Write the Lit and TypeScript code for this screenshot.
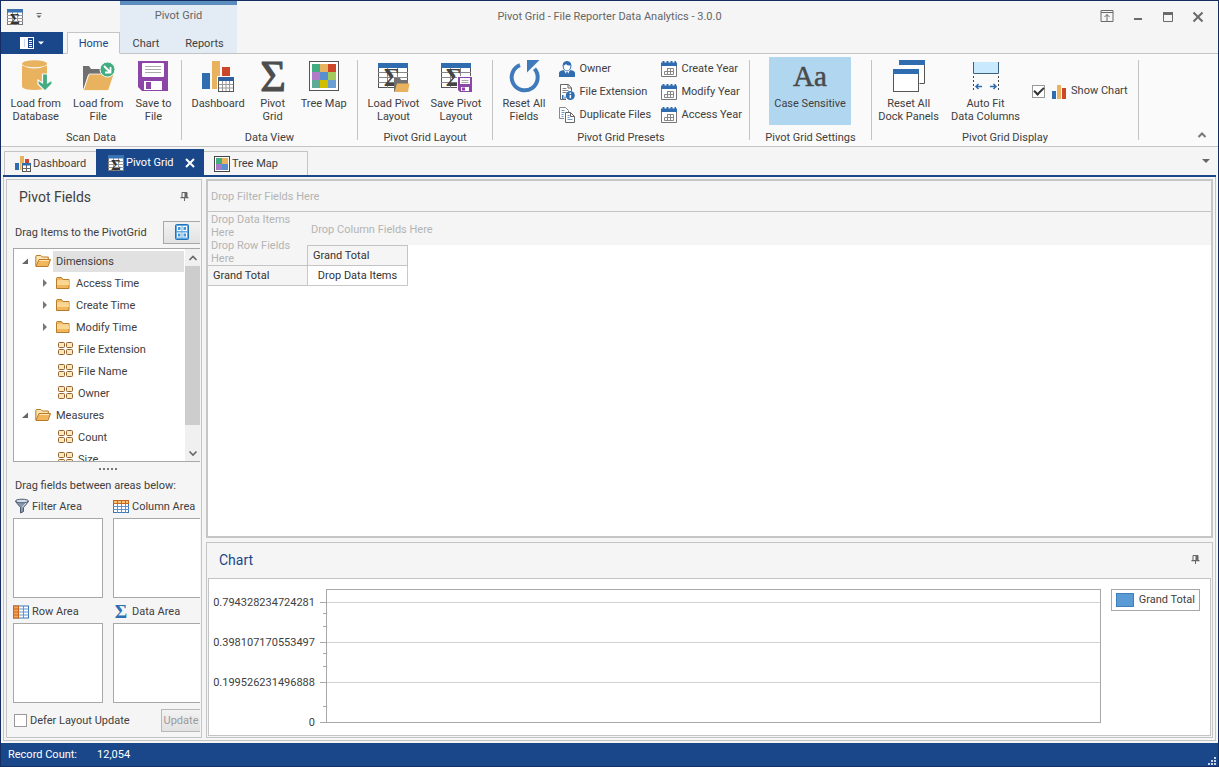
import { LitElement, html, css, svg, nothing, TemplateResult } from "lit";
import { customElement, property, state } from "lit/decorators.js";
import { classMap } from "lit/directives/class-map.js";

/* ---------- icons ---------- */

const gridLines = svg`
  <rect x="1.5" y="3.5" width="29" height="24" fill="#fff" stroke="#555"/>
  <path d="M1 12.5h30M1 17.5h30M1 22.5h30M10.500 7v21M20.500 7v21" stroke="#888" fill="none"/>
  <rect x="1" y="3" width="30" height="5" fill="#2f6cb0"/>`;

const sigma = (x: number, y: number, size: number, fill: string, bold = false) => svg`
  <text x=${x} y=${y} font-family="Liberation Serif, serif" font-size=${size}
    font-weight=${bold ? "bold" : "normal"} text-anchor="middle" fill=${fill}>Σ</text>`;

const calendar = svg`
  <path d="M.5 4v11.500h15V4" fill="#fff" stroke="#777"/>
  <path d="M0 1.500h1.500V0h2v1.500h2V0h2v1.500h2V0h2v1.500h2V0h1.500v1.500H16V5H0z" fill="#2f6cb0"/>
  <path d="M6 7.500h6.500v6h-9V10.500h9M6.500 7.500v6M9.500 7.500v6" stroke="#888" fill="none"/>`;

const folderClosed = svg`
  <path d="M1.500 3.500q0-1 1-1h4l1.500 2h6v9h-12.500z" fill="#f0b75c" stroke="#b87a2b"/>
  <path d="M2 6h12" stroke="#fff0c8"/>
  <path d="M2 7h12v3H2z" fill="#fbd78f"/>`;

const folderOpen = svg`
  <path d="M.8 13V3.500q0-1 1-1h4l1.500 1.500h6v2.500" fill="#fbe3ae" stroke="#b87a2b"/>
  <path d="M1 13.500L4 6.500h11.500L13 13.500z" fill="#f1b75a" stroke="#b87a2b"/>
  <path d="M4.500 7.500h9.500" stroke="#fde6b4"/>`;

const ICONS: Record<string, { box: number; art: TemplateResult }> = {
  database: {
    box: 32,
    art: svg`
      <path d="M2 5.500q12.500 6 25 0V27q-2 3-12.500 3T2 27z" fill="#e9b25f"/>
      <ellipse cx="14.500" cy="3.700" rx="12.500" ry="3.500" fill="#e9b25f"/>
      <path d="M22.500 14h5v9l4.500-3v4l-7 7-7-7v-4l4.500 3z" fill="#43ac80" stroke="#fafafa" stroke-width="1.200"/>`,
  },
  loadFile: {
    box: 32,
    art: svg`
      <path d="M1 30V6h6l2 3h12v6H6z" fill="#707070"/>
      <path d="M7 14h25l-5.500 16.500H1.500z" fill="#e9b25f" stroke="#fafafa" stroke-width=".8"/>
      <circle cx="25.500" cy="9.500" r="7.500" fill="#43ac80" stroke="#fafafa"/>
      <path d="M22 6l6 6M28.500 7v5.500H23" stroke="#fff" stroke-width="1.800" fill="none"/>`,
  },
  save: {
    box: 32,
    art: svg`
      <path d="M1 1h30v30H5l-4-4z" fill="#8b46a8"/>
      <rect x="5" y="3" width="22" height="14" rx="1" fill="#fff"/>
      <path d="M8 6.500h16M8 9.500h16M8 12.500h16" stroke="#aaa"/>
      <path d="M7 21h18v9H7z" fill="#fff"/><path d="M9 22h5v7H9z" fill="#8b46a8"/>`,
  },
  dashboard: {
    box: 32,
    art: svg`
      <path d="M0 13h8v16H0z" fill="#2f6cb0"/><path d="M10 1h8v28h-8z" fill="#e9b25f"/>
      <path d="M20 7h8v10h-8z" fill="#ce4629"/>
      <rect x="15" y="16" width="17" height="16" fill="#fafafa"/>
      <rect x="16.500" y="17.500" width="15" height="14" fill="#fff" stroke="#555"/>
      <path d="M17 24.500h14M17 28h14M20.500 20v11M24 20v11M27.500 20v11" stroke="#999"/>
      <path d="M16 17h16v4H16z" fill="#2f5f9e"/>`,
  },
  sigma: { box: 32, art: svg`<g stroke="#4d4d4d">${sigma(16, 31, 44, "#4d4d4d")}</g>` },
  treeMap: {
    box: 32,
    art: svg`
      <rect x="1.500" y="1.500" width="29" height="29" fill="#fff" stroke="#555"/>
      <path d="M4 4h8v8H4z" fill="#43ac80"/><path d="M12 4h8v8h-8z" fill="#e9b25f"/><path d="M20 4h8v8h-8z" fill="#ce4629"/>
      <path d="M4 12h8v8H4z" fill="#b07cc6"/><path d="M12 12h8v8h-8z" fill="#5a8fcf"/><path d="M20 12h8v8h-8z" fill="#a2cb5c"/>
      <path d="M4 20h8v8H4z" fill="#5fab98"/><path d="M12 20h8v8h-8z" fill="#cfbf00"/><path d="M20 20h8v8h-8z" fill="#6b9fd4"/>`,
  },
  loadLayout: {
    box: 32,
    art: svg`${gridLines}${sigma(15, 26, 25, "#444", true)}
      <path d="M17 32V18h6l1 2h7v4z" fill="#707070"/>
      <path d="M20 23.500h12.500L31 32H17.500z" fill="#e9b25f"/>`,
  },
  saveLayout: {
    box: 32,
    art: svg`${gridLines}${sigma(14, 26, 25, "#444", true)}
      <path d="M17 16h16v16H17z" fill="#fafafa"/>
      <path d="M18 17h14v15H20l-2-2z" fill="#8b46a8"/><path d="M20 18h10v6H20z" fill="#fff"/>
      <path d="M21.500 20.500h7M21.500 22.500h7" stroke="#aaa"/><path d="M21 27h8v4h-8z" fill="#fff"/><path d="M22 27.500h3v3h-3z" fill="#8b46a8"/>`,
  },
  reset: {
    box: 32,
    art: svg`
      <path d="M12 5.200A13 13 0 1 0 26.500 8.800" fill="none" stroke="#3f7bbb" stroke-width="4"/>
      <path d="M19 0h12.500L19 12.500z" fill="#3f7bbb"/>`,
  },
  caseSensitive: {
    box: 32,
    art: svg`<text x="16" y="26" font-family="Liberation Serif, serif" font-size="29" text-anchor="middle"
      fill="#4a4a4a" stroke="#4a4a4a" stroke-width=".5">Aa</text>`,
  },
  dockPanels: {
    box: 32,
    art: svg`
      <path d="M6.500.5h25v23h-6" fill="#fff" stroke="#555"/><path d="M6 0h26v5H6z" fill="#2f6cb0"/>
      <path d="M-.5 8h27v24h-27z" fill="#fafafa"/>
      <rect x=".5" y="9.500" width="25" height="22" fill="#fff" stroke="#555"/><path d="M0 9h26v5H0z" fill="#2f6cb0"/>`,
  },
  autoFit: {
    box: 32,
    art: svg`
      <path d="M3.500 2v11.500h25V2" fill="#c9e9ff" stroke="#3d627e"/>
      <path d="M3.500 16v15M28.500 16v15" stroke="#444" stroke-dasharray="2 2"/>
      <path d="M12 26.500H6M8.500 24L6 26.500 8.500 29M20 26.500h6M23.500 24l2.500 2.500-2.500 2.500" stroke="#2f6cb0" stroke-width="1.500" fill="none"/>`,
  },
  owner: {
    box: 16,
    art: svg`
      <path d="M4 4.500Q4 .5 8 .5t4 4Q11.500 10 8 10T4 4.500z" fill="#fff" stroke="#2f6cb0"/>
      <path d="M4 4.500Q4 .5 8 .5t4 4Q8 5 7 3 6 4.500 4 4.500z" fill="#2f6cb0"/>
      <path d="M0 16v-4q0-2 4.500-3L8 13l3.500-4q4.500 1 4.500 3v4z" fill="#2f6cb0"/>
      <path d="M5.500 9.500L8 15.500l2.500-6L8 11z" fill="#fff"/><path d="M7.300 11h1.400l.6 4L8 16l-1.300-1z" fill="#2f6cb0"/>`,
  },
  extension: {
    box: 16,
    art: svg`
      <path d="M7 15.500H1.500V.5h8L12.500 4v3" fill="#fff" stroke="#666"/><path d="M9 .5V4h3.500" fill="none" stroke="#666"/>
      <path d="M3.500 4.500h4M3.500 6.500h6M3.500 8.500h4" stroke="#888"/><path d="M3 11h1.500v4H3zM5.500 12.500h1V15h-1z" fill="#2f6cb0"/>
      <circle cx="11.300" cy="11.500" r="4.500" fill="#2f6cb0"/><path d="M10.600 8.500h1.500V10h-1.500zM10.600 11h1.500v3.300h-1.500z" fill="#fff"/>`,
  },
  duplicate: {
    box: 16,
    art: svg`
      <path d="M5 11.500H.5V.5h6l3 3V5" fill="#fff" stroke="#888"/><path d="M2.500 3.500h3M2.500 5.500h3M2.500 7.500h2M2.500 9.500h2" stroke="#6f97c4"/>
      <path d="M6.500 5.500h5l4 4v6h-9z" fill="#fff" stroke="#666"/><path d="M11.500 5.500v4h4" fill="none" stroke="#666"/>
      <path d="M8.500 8.500h2M8.500 10.500h2M8.500 12.500h5" stroke="#6f97c4"/>`,
  },
  calendar: { box: 16, art: calendar },
  bars: {
    box: 16,
    art: svg`<path d="M0 8h4v8H0z" fill="#2f6cb0"/><path d="M5 2h4v14H5z" fill="#e9b25f"/><path d="M10 5h4v11h-4z" fill="#ce4629"/>`,
  },
  dashboardSmall: {
    box: 16,
    art: svg`
      <path d="M0 7h4v7H0z" fill="#2f6cb0"/><path d="M5 0h4v14H5z" fill="#e9b25f"/><path d="M10 3h4v4h-4z" fill="#ce4629"/>
      <path d="M6.500 7h9.500v9H6.500z" fill="#fafafa"/><rect x="7.500" y="7.500" width="8" height="8" fill="#fff" stroke="#555"/>
      <path d="M8 12.500h8M11.500 9v7" stroke="#666"/><path d="M7 7h9v2.500H7z" fill="#2f6cb0"/>`,
  },
  pivotSmall: {
    box: 16,
    art: svg`
      <rect x=".5" y=".5" width="15" height="15" fill="#fff" stroke="#777"/><path d="M0 6.500h16M0 9.500h16M0 12.500h16M5.500 3v13M10.500 3v13" stroke="#999"/>
      <path d="M0 0h16v3.500H0z" fill="#3a73b2"/>${sigma(8, 15, 15, "#333", true)}`,
  },
  treeMapSmall: {
    box: 16,
    art: svg`
      <rect x=".5" y=".5" width="15" height="15" fill="#fff" stroke="#444"/>
      <path d="M2 2h6v6H2z" fill="#43ac80"/><path d="M8 2h6v6H8z" fill="#e9b25f"/>
      <path d="M2 8h6v6H2z" fill="#a878c8"/><path d="M8 8h6v6H8z" fill="#5a8fcf"/>`,
  },
  fileMenu: {
    box: 16,
    art: svg`
      <path d="M1 2h7v12H1z" fill="#fff"/><rect x="8.500" y="2.500" width="6" height="11" fill="none" stroke="#fff"/>
      <path d="M10 5.500h3M10 7.500h3M10 9.500h3M10 11.500h3" stroke="#fff"/><path d="M5.500 4v8" stroke="#c9d6ea"/>`,
  },
  folder: { box: 16, art: folderClosed },
  folderOpen: { box: 16, art: folderOpen },
  field: {
    box: 16,
    art: svg`<g fill="#fce9bd" stroke="#94602f">
      <rect x=".5" y="1.500" width="6" height="5" rx="1"/><rect x="8.500" y="1.500" width="6" height="5" rx="1"/>
      <rect x=".5" y="8.500" width="6" height="5" rx="1"/><rect x="8.500" y="8.500" width="6" height="5" rx="1"/></g>`,
  },
  layoutPicker: {
    box: 16,
    art: svg`<rect x="1.500" y=".5" width="13" height="15" rx="1" fill="#5fa8e4" stroke="#2173ba"/>
      <g fill="#4b93d3" stroke="#fff"><rect x="3.500" y="2.500" width="3.500" height="4"/><rect x="9" y="2.500" width="3.500" height="4"/>
      <rect x="3.500" y="9" width="3.500" height="4"/><rect x="9" y="9" width="3.500" height="4"/></g>`,
  },
  filter: {
    box: 16,
    art: svg`<path d="M2.500 2.500L7.500 8.500V14l3-1.500v-4l5-6z" fill="#8b99ad" stroke="#4c5b73"/>
      <path d="M9.500 8l4-4.500" stroke="#dfe6ee"/><ellipse cx="9" cy="2" rx="6.500" ry="1.800" fill="#d6dde6" stroke="#4c5b73"/>`,
  },
  columnArea: {
    box: 16,
    art: svg`<rect x=".5" y="1.500" width="15" height="12" fill="#fff" stroke="#3f77b5"/>
      <path d="M0 7.500h16M0 10.500h16M4.500 5v9M8.500 5v9M12.500 5v9" stroke="#5f93cc"/>
      <rect x=".5" y="1.500" width="15" height="3" fill="#f7c27c" stroke="#c8681c"/><path d="M4.500 2v3M8.500 2v3M12.500 2v3" stroke="#c8681c"/>`,
  },
  rowArea: {
    box: 16,
    art: svg`<rect x=".5" y="2" width="15" height="12" fill="#fff" stroke="#3f77b5"/>
      <path d="M5 5h11M5 8h11M5 11h11M10.500 2v12" stroke="#5f93cc"/>
      <rect x=".5" y="2" width="5" height="12" fill="#f3a45a" stroke="#c8681c"/><path d="M1 5h4M1 8h4M1 11h4" stroke="#c8681c"/>`,
  },
  dataArea: { box: 16, art: svg`${sigma(8, 14, 19, "#2c6fb5", true)}` },
  pin: {
    box: 10,
    art: svg`<path d="M3 .5h5v5H3z" fill="none" stroke="#666"/><path d="M5.500 0H8v5.500H5.500zM1.500 5h8v1.200h-8zM5 6h1v3H5z" fill="#666"/>`,
  },
  close: { box: 12, art: svg`<path d="M1.500 1.500l9 9M10.500 1.500l-9 9" stroke="currentColor" stroke-width="2"/>` },
  closeSmall: { box: 10, art: svg`<path d="M1 1l8 8M9 1l-8 8" stroke="currentColor" stroke-width="2"/>` },
  minimize: { box: 12, art: svg`<path d="M2 7h8v2H2z" fill="currentColor"/>` },
  maximize: { box: 12, art: svg`<path d="M1.500 1.500h9v9h-9z" fill="none" stroke="currentColor"/><path d="M1 1h10v3H1z" fill="currentColor"/>` },
  ribbonMode: {
    box: 14,
    art: svg`<path d="M1 .5h12v11H1zM1 2.500h12" fill="none" stroke="currentColor"/><path d="M7 11V4.500M4.500 7L7 4.500 9.500 7" fill="none" stroke="currentColor"/>`,
  },
  collapse: { box: 10, art: svg`<path d="M1.500 7L5 3.500 8.500 7" fill="none" stroke="#777" stroke-width="2"/>` },
  scrollUp: { box: 10, art: svg`<path d="M1.500 7L5 3.500 8.500 7" fill="none" stroke="#666" stroke-width="1.600"/>` },
  scrollDown: { box: 10, art: svg`<path d="M1.500 3.500L5 7l3.500-3.500" fill="none" stroke="#666" stroke-width="1.600"/>` },
  arrowDown: { box: 8, art: svg`<path d="M0 2h8L4 6z" fill="currentColor"/>` },
  arrowSmall: { box: 8, art: svg`<path d="M1 2.500h6L4 5.500z" fill="currentColor"/>` },
  customize: { box: 8, art: svg`<path d="M1.500 0h5v1h-5zM1.500 2.500h5L4 5z" fill="#666"/>` },
  expanded: { box: 8, art: svg`<path d="M7 1.500V7H1z" fill="#666"/>` },
  collapsed: { box: 8, art: svg`<path d="M2 0v8l4-4z" fill="#777"/>` },
  grip: {
    box: 10,
    art: svg`<path d="M7 1h2v2H7zM4 4h2v2H4zM7 4h2v2H7zM1 7h2v2H1zM4 7h2v2H4zM7 7h2v2H7z" fill="#c9d3e4"/>`,
  },
};

const icon = (name: string) => {
  const { box, art } = ICONS[name];
  return html`<svg class="icon" width=${box} height=${box} viewBox="0 0 ${box} ${box}" aria-hidden="true">${art}</svg>`;
};

/* ---------- data ---------- */

interface Command { icon: string; label: string; pressed?: boolean }
interface TreeNode { icon: string; label: string; kind: "root" | "branch" | "leaf"; open?: boolean; selected?: boolean }

const SCAN: Command[] = [
  { icon: "database", label: "Load from\nDatabase" },
  { icon: "loadFile", label: "Load from\nFile" },
  { icon: "save", label: "Save to\nFile" },
];
const VIEWS: Command[] = [
  { icon: "dashboard", label: "Dashboard" },
  { icon: "sigma", label: "Pivot\nGrid" },
  { icon: "treeMap", label: "Tree Map" },
];
const LAYOUTS: Command[] = [
  { icon: "loadLayout", label: "Load Pivot\nLayout" },
  { icon: "saveLayout", label: "Save Pivot\nLayout" },
];
const PRESETS: Command[] = [
  { icon: "owner", label: "Owner" },
  { icon: "calendar", label: "Create Year" },
  { icon: "extension", label: "File Extension" },
  { icon: "calendar", label: "Modify Year" },
  { icon: "duplicate", label: "Duplicate Files" },
  { icon: "calendar", label: "Access Year" },
];
const DISPLAY: Command[] = [
  { icon: "dockPanels", label: "Reset All\nDock Panels" },
  { icon: "autoFit", label: "Auto Fit\nData Columns" },
];
const FIELDS: TreeNode[] = [
  { icon: "folderOpen", label: "Dimensions", kind: "root", open: true, selected: true },
  { icon: "folder", label: "Access Time", kind: "branch" },
  { icon: "folder", label: "Create Time", kind: "branch" },
  { icon: "folder", label: "Modify Time", kind: "branch" },
  { icon: "field", label: "File Extension", kind: "leaf" },
  { icon: "field", label: "File Name", kind: "leaf" },
  { icon: "field", label: "Owner", kind: "leaf" },
  { icon: "folderOpen", label: "Measures", kind: "root", open: true },
  { icon: "field", label: "Count", kind: "leaf" },
  { icon: "field", label: "Size", kind: "leaf" },
];
const AREAS = [
  { icon: "filter", label: "Filter Area" },
  { icon: "columnArea", label: "Column Area" },
  { icon: "rowArea", label: "Row Area" },
  { icon: "dataArea", label: "Data Area" },
];
const AXIS = ["0.794328234724281", "0.398107170553497", "0.199526231496888", "0"];

/* ---------- shared styles ---------- */

const base = css`
  * { box-sizing: border-box; }
  button {
    font: inherit; color: inherit; background: none; border: 0; padding: 0; margin: 0;
    display: flex; align-items: center; justify-content: center;
  }
  a { color: inherit; text-decoration: none; }
  .icon { display: block; flex: none; overflow: visible; }
  h2, p { margin: 0; font: inherit; }
`;

/* ---------- ribbon ---------- */

@customElement("ribbon-group")
class RibbonGroup extends LitElement {
  @property() caption = "";
  static styles = [base, css`
    :host { display: flex; flex-direction: column; height: 80px; border-right: 1px solid #c4c4c4; flex: none; }
    .items { display: flex; flex: none; justify-content: center; height: 70px; }
    .caption { text-align: center; line-height: 15px; white-space: nowrap; }
  `];
  render() {
    return html`<div class="items"><slot></slot></div><div class="caption">${this.caption}</div>`;
  }
}

@customElement("app-ribbon")
class AppRibbon extends LitElement {
  @state() private showChart = true;

  static styles = [base, css`
    :host { display: flex; align-items: flex-start; padding: 6px 0 4px; height: 93px; background: #fafafa; border-bottom: 1px solid #c4c4c4; }
    .scan { width: 181px; }
    .view { width: 176px; }
    .layout { width: 135px; }
    .presets { width: 257px; }
    .settings { width: 122px; }
    .display { width: 267px; }
    .large { flex-direction: column; justify-content: flex-start; min-width: 46px; padding: 0 6px; height: 65px; }
    .layout .large, .view .large { margin-left: -1px; }
    .large span { margin-top: 5px; line-height: 13px; text-align: center; white-space: pre; }
    .pressed { background: #b1d6f0; width: 82px; padding: 3px 0 0; height: 68px; margin-top: -3px; margin-right: 1px; }
    .small { display: grid; grid-template-columns: 102px 84px; grid-auto-rows: 23px; height: 69px; margin: -3px 0 0 8px; }
    .small button { justify-content: flex-start; gap: 4px; }
    .check { display: flex; align-items: center; height: 62px; margin: 0 10px 0 6px; }
    .check input { margin: 0 7px 0 0; }
    .check .icon { margin-right: 3px; }
    .collapse { margin: auto 10px 0 auto; width: 12px; height: 14px; }
    input {
      appearance: none; width: 13px; height: 13px; border: 1px solid #999; background: #fff; display: grid; place-items: center;
    }
    input:checked::after {
      content: ""; width: 4px; height: 8px; margin-top: -2px; border: solid #333; border-width: 0 2px 2px 0; transform: rotate(45deg);
    }
  `];

  private large(c: Command) {
    return html`<button type="button" class=${classMap({ large: true, pressed: !!c.pressed })}
      aria-pressed=${c.pressed ? "true" : nothing}>${icon(c.icon)}<span>${c.label}</span></button>`;
  }

  render() {
    return html`
      <ribbon-group class="scan" caption="Scan Data">${SCAN.map((c) => this.large(c))}</ribbon-group>
      <ribbon-group class="view" caption="Data View">${VIEWS.map((c) => this.large(c))}</ribbon-group>
      <ribbon-group class="layout" caption="Pivot Grid Layout">${LAYOUTS.map((c) => this.large(c))}</ribbon-group>
      <ribbon-group class="presets" caption="Pivot Grid Presets">
        ${this.large({ icon: "reset", label: "Reset All\nFields" })}
        <div class="small">
          ${PRESETS.map((c) => html`<button type="button">${icon(c.icon)}<span>${c.label}</span></button>`)}
        </div>
      </ribbon-group>
      <ribbon-group class="settings" caption="Pivot Grid Settings">
        ${this.large({ icon: "caseSensitive", label: "Case Sensitive", pressed: true })}
      </ribbon-group>
      <ribbon-group class="display" caption="Pivot Grid Display">
        ${DISPLAY.map((c) => this.large(c))}
        <label class="check">
          <input type="checkbox" .checked=${this.showChart}
            @change=${(e: Event) => (this.showChart = (e.target as HTMLInputElement).checked)} />
          ${icon("bars")}Show Chart
        </label>
      </ribbon-group>
      <button type="button" class="collapse" aria-label="Collapse ribbon">${icon("collapse")}</button>`;
  }
}

/* ---------- field list ---------- */

@customElement("pivot-fields")
class PivotFields extends LitElement {
  static styles = [base, css`
    :host {
      display: flex; flex-direction: column; width: 196px; flex: none; min-height: 0; overflow: hidden;
      border: 1px solid #c4c4c4; padding: 0 1px 5px 6px;
    }
    .head { display: flex; align-items: center; justify-content: space-between; height: 35px; padding: 0 11px 2px 6px; }
    .head h2 { font-size: 14px; }
    .tools { display: flex; align-items: center; justify-content: space-between; margin: 6px 0 4px; padding-left: 2px; }
    .tools button, .foot button {
      height: 23px; background: linear-gradient(#f2f2f2, #e2e2e2); border: 1px solid #a8a8a8; border-right: 0;
    }
    .tools button { width: 37px; padding-bottom: 1px; }
    .tree { flex: 1; min-height: 0; display: flex; background: #fff; border: 1px solid #a8a8a8; border-right: 0; overflow: hidden; }
    .rows { flex: 1; padding-top: 1px; min-width: 0; }
    .row { display: flex; align-items: center; height: 22px; }
    .root { padding-left: 5px; }
    .branch { padding-left: 25px; }
    .leaf { padding-left: 44px; }
    .toggle { width: 12px; height: 12px; margin-right: 4px; }
    .name { flex: 1; margin-left: 2px; padding-left: 3px; line-height: 21px; }
    .leaf .name { padding-left: 2px; }
    .selected .name { background: #e1e1e1; }
    .scroll { width: 15px; display: flex; flex-direction: column; background: #f0f0f0; margin-left: 1px; }
    .scroll button { height: 17px; flex: none; }
    .thumb { flex: 1; background: #cdcdcd; margin-bottom: 19px; }
    .split { display: flex; justify-content: center; align-items: center; gap: 2px; height: 13px; padding-left: 2px; }
    .split i { width: 2px; height: 2px; background: #777; }
    .hint { padding-left: 2px; line-height: 22px; }
    .areas { display: grid; grid-template-columns: 90px 1fr; column-gap: 10px; row-gap: 4px; }
    .title { display: flex; align-items: center; gap: 3px; height: 21px; padding-bottom: 2px; white-space: nowrap; }
    .drop { height: 80px; background: #fff; border: 1px solid #a8a8a8; }
    .area:nth-child(even) .drop { border-right: 0; }
    .foot { display: flex; align-items: center; justify-content: space-between; margin-top: 6px; padding-left: 1px; }
    .foot label { display: flex; align-items: center; gap: 3px; }
    .foot input { appearance: none; margin: 0; width: 13px; height: 13px; border: 1px solid #999; background: #fff; }
    .foot button { width: 39px; color: #9a9a9a; border-color: #b8b8b8; }
  `];

  render() {
    return html`
      <div class="head"><h2>Pivot Fields</h2><button type="button" aria-label="Auto hide">${icon("pin")}</button></div>
      <div class="tools"><span>Drag Items to the PivotGrid</span>
        <button type="button" aria-label="Field list layout">${icon("layoutPicker")}</button></div>
      <div class="tree">
        <div class="rows" role="tree">
          ${FIELDS.map((n) => html`
            <div role="treeitem" class=${classMap({ row: true, [n.kind]: true, selected: !!n.selected })}>
              ${n.kind === "leaf" ? nothing : html`<button type="button" class="toggle" aria-label="Toggle ${n.label}">${icon(n.open ? "expanded" : "collapsed")}</button>`}
              ${icon(n.icon)}<span class="name">${n.label}</span>
            </div>`)}
        </div>
        <div class="scroll">
          <button type="button" aria-label="Scroll up">${icon("scrollUp")}</button>
          <div class="thumb"></div>
          <button type="button" aria-label="Scroll down">${icon("scrollDown")}</button>
        </div>
      </div>
      <div class="split"><i></i><i></i><i></i><i></i><i></i></div>
      <p class="hint">Drag fields between areas below:</p>
      <div class="areas">
        ${AREAS.map((a) => html`<div class="area"><div class="title">${icon(a.icon)}${a.label}</div><div class="drop"></div></div>`)}
      </div>
      <div class="foot">
        <label><input type="checkbox" />Defer Layout Update</label>
        <button type="button" disabled>Update</button>
      </div>`;
  }
}

/* ---------- pivot grid ---------- */

@customElement("pivot-grid")
class PivotGrid extends LitElement {
  static styles = [base, css`
    :host { display: block; flex: 1; min-height: 0; background: #fff; border: 2px solid #c6c6c6; color: #333; }
    .filter { height: 31px; line-height: 32px; padding-left: 3px; background: #f5f5f5; border-bottom: 1px solid #c4c4c4; }
    .filter, .hint { color: #b4b4b4; }
    table { width: 100%; table-layout: fixed; border-collapse: separate; border-spacing: 0; }
    .first { width: 99px; }
    .second { width: 101px; }
    th, td { padding: 0; font-weight: normal; text-align: left; }
    .hint { background: #f5f5f5; padding-left: 3px; }
    .corner { line-height: 13px; vertical-align: top; border-bottom: 1px solid #c4c4c4; }
    .corner p { padding-right: 10px; }
    .corner p:first-child { padding-top: 1px; }
    .columns { height: 33px; padding-left: 4px; padding-top: 2px; }
    .total { height: 21px; padding-left: 5px; background: #f5f5f5; }
    .column { border: 1px solid #c4c4c4; }
    .row { height: 20px; border-bottom: 1px solid #c4c4c4; }
    .items { text-align: center; border: solid #c9c9c9; border-width: 0 1px 1px; }
  `];

  render() {
    return html`
      <div class="filter">Drop Filter Fields Here</div>
      <table>
        <colgroup><col class="first" /><col class="second" /><col /></colgroup>
        <tr>
          <td class="hint corner" rowspan="2"><p>Drop Data Items Here</p><p>Drop Row Fields Here</p></td>
          <td class="hint columns" colspan="2">Drop Column Fields Here</td>
        </tr>
        <tr><th class="total column">Grand Total</th><td></td></tr>
        <tr><th class="total row">Grand Total</th><td class="items">Drop Data Items</td><td></td></tr>
      </table>`;
  }
}

/* ---------- chart ---------- */

@customElement("chart-panel")
class ChartPanel extends LitElement {
  static styles = [base, css`
    :host { display: block; flex: none; border: 1px solid #c4c4c4; padding: 0 1px 1px; }
    .head { display: flex; align-items: center; justify-content: space-between; height: 35px; padding: 0 11px 2px; }
    .head h2 { font-size: 14px; color: #19478a; }
    .canvas { display: flex; align-items: flex-start; background: #fff; border: 1px solid #c4c4c4; padding: 10px 10px 12px 4px; }
    .axis { display: flex; flex-direction: column; gap: 24px; padding-top: 6px; width: 102px; height: 134px; text-align: right; line-height: 16px; }
    .axis span { flex: none; }
    .ticks { margin-left: 5px; }
    .plot { flex: 1; border: 1px solid #a8a8a8; padding-top: 12px; }
    .line { height: 40px; border-top: 1px solid #d2d2d2; }
    .legend { display: flex; align-items: center; gap: 5px; height: 22px; margin-left: 10px; padding: 0 4px; border: 1px solid #a8a8a8; }
    .swatch { width: 18px; height: 14px; background: #5b9bd5; border: 1px solid #3f7fbb; }
  `];

  render() {
    return html`
      <div class="head"><h2>Chart</h2><button type="button" aria-label="Auto hide">${icon("pin")}</button></div>
      <div class="canvas">
        <div class="axis">${AXIS.map((v) => html`<span>${v}</span>`)}</div>
        <svg class="ticks" width="6" height="134" aria-hidden="true">
          <path stroke="#a8a8a8" d="M0 13.500h6M0 53.500h6M0 93.500h6M0 133.500h6M3 24.500h3M3 37.500h3M3 64.500h3M3 77.500h3M3 117.500h3" />
        </svg>
        <div class="plot"><div class="line"></div><div class="line"></div><div class="line"></div></div>
        <div class="legend"><span class="swatch"></span>Grand Total</div>
      </div>`;
  }
}

/* ---------- window ---------- */

@customElement("app-root")
class AppRoot extends LitElement {
  static styles = [base, css`
    :host {
      display: flex; flex-direction: column; box-sizing: border-box; height: 100vh; overflow: hidden;
      border: 1px solid #142d62; background: #f5f5f5; color: #404040;
      font: 11px/14px Roboto, "Liberation Sans", sans-serif;
    }
    .titlebar { display: grid; grid-template-columns: 1fr auto 1fr; height: 31px; color: #666; }
    .left { display: flex; }
    .quick { display: flex; align-items: center; gap: 12px; width: 119px; padding-left: 6px; }
    .context { width: 117px; border-top: 4px solid #5b8dbf; background: #e3ecf5; text-align: center; line-height: 22px; }
    .caption { line-height: 31px; }
    .controls { display: flex; justify-content: flex-end; align-items: center; gap: 18px; padding-right: 14px; color: #6a6a6a; }
    .tabs { display: flex; height: 22px; }
    .tabs a { display: flex; align-items: center; justify-content: center; border-bottom: 1px solid #c4c4c4; padding-top: 3px; }
    .file { width: 62px; background: #19478a; color: #fff; gap: 2px; }
    .gap { width: 4px; border-bottom: 1px solid #c4c4c4; }
    .rest { flex: 1; border-bottom: 1px solid #c4c4c4; }
    .tabs .home { width: 53px; color: #19478a; background: #fafafa; border: 1px solid #c4c4c4; border-bottom-color: #fafafa; padding-top: 2px; }
    .tabs .chart { width: 52px; background: #e3ecf5; }
    .tabs .reports { width: 65px; background: #e3ecf5; }
    .docs { display: flex; align-items: flex-end; height: 30px; padding: 0 6px 0 1px; margin: 0 2px; border-bottom: 2px solid #19478a; }
    .doc { display: flex; align-items: center; gap: 2px; height: 24px; border: 1px solid #c4c4c4; border-bottom: 0; padding: 0 10px; }
    .dashboard { width: 92px; border-right: 0; }
    .treemap { width: 104px; border-left: 0; }
    .active { width: 108px; height: 26px; border: 0; background: #19478a; color: #fff; padding: 1px 9px 0 12px; }
    .active button { margin-left: auto; }
    .more { margin: 0 0 10px auto; color: #666; }
    .workspace {
      flex: 1; min-height: 0; display: flex; gap: 4px; margin: 0 2px 2px; padding: 2px; border: 1px solid #c4c4c4; border-top: 0;
    }
    .main { flex: 1; min-width: 0; display: flex; flex-direction: column; gap: 4px; }
    .status { display: flex; align-items: center; gap: 20px; height: 23px; padding: 1px 1px 0 7px; background: #19478a; color: #fff; }
    .status .icon { margin: auto 0 0 auto; }
  `];

  render() {
    return html`
      <header class="titlebar">
        <div class="left">
          <div class="quick">${icon("pivotSmall")}<button type="button" aria-label="Customize toolbar">${icon("customize")}</button></div>
          <div class="context">Pivot Grid</div>
        </div>
        <div class="caption">Pivot Grid - File Reporter Data Analytics - 3.0.0</div>
        <div class="controls">
          <button type="button" aria-label="Ribbon display options">${icon("ribbonMode")}</button>
          <button type="button" aria-label="Minimize">${icon("minimize")}</button>
          <button type="button" aria-label="Maximize">${icon("maximize")}</button>
          <button type="button" aria-label="Close">${icon("close")}</button>
        </div>
      </header>
      <nav class="tabs">
        <button type="button" class="file" aria-label="File menu">${icon("fileMenu")}${icon("arrowSmall")}</button>
        <span class="gap"></span>
        <a href="#home" class="home">Home</a>
        <a href="#chart" class="chart">Chart</a>
        <a href="#reports" class="reports">Reports</a>
        <span class="rest"></span>
      </nav>
      <app-ribbon></app-ribbon>
      <nav class="docs">
        <a href="#dashboard" class="doc dashboard">${icon("dashboardSmall")}Dashboard</a>
        <div class="doc active">${icon("pivotSmall")}<a href="#pivot">Pivot Grid</a>
          <button type="button" aria-label="Close tab">${icon("closeSmall")}</button></div>
        <a href="#treemap" class="doc treemap">${icon("treeMapSmall")}Tree Map</a>
        <button type="button" class="more" aria-label="Open documents">${icon("arrowDown")}</button>
      </nav>
      <div class="workspace">
        <pivot-fields></pivot-fields>
        <main class="main"><pivot-grid></pivot-grid><chart-panel></chart-panel></main>
      </div>
      <footer class="status"><span>Record Count:</span><span>12,054</span>${icon("grip")}</footer>`;
  }
}
